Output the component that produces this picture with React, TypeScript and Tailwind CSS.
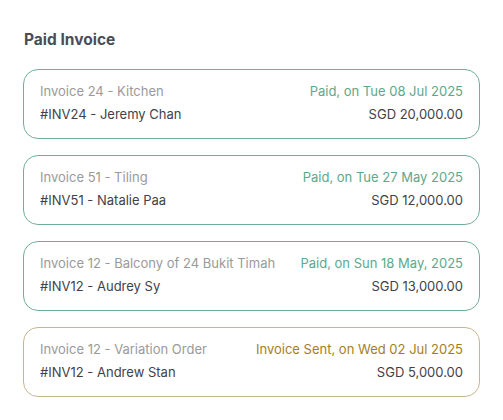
import React from "react";

type Inv = { title: string; ref: string; status: string; amount: string; sent?: boolean };

const items: Inv[] = [
  { title: "Invoice 24 - Kitchen", ref: "#INV24 - Jeremy Chan", status: "Paid, on Tue 08 Jul 2025", amount: "SGD 20,000.00" },
  { title: "Invoice 51 - Tiling", ref: "#INV51 - Natalie Paa", status: "Paid, on Tue 27 May 2025", amount: "SGD 12,000.00" },
  { title: "Invoice 12 - Balcony of 24 Bukit Timah", ref: "#INV12 - Audrey Sy", status: "Paid, on Sun 18 May, 2025", amount: "SGD 13,000.00" },
  { title: "Invoice 12 - Variation Order", ref: "#INV12 - Andrew Stan", status: "Invoice Sent, on Wed 02 Jul 2025", amount: "SGD 5,000.00", sent: true },
];

export default function App() {
  return (
    <div className="w-[503px] h-[420px] bg-white px-[23px] pt-[30px]" style={{ fontFamily: "Inter, 'Noto Sans', sans-serif" }}>
      <h1 className="text-[15.5px] font-bold text-[#4a4d56] leading-[20px] ml-[1px]">Paid Invoice</h1>
      <div className="mt-[19px] flex flex-col gap-[16px] w-[457px]">
        {items.map((it, i) => (
          <div
            key={i}
            className={`h-[70px] rounded-[15px] border px-[16px] pt-[11px] flex flex-col gap-[3px] ${it.sent ? "border-[#c9b58d]" : "border-[#72ad9c]"}`}
          >
            <div className="flex justify-between items-center text-[13px] leading-[20px]">
              <span className="text-[#9a9a9a]">{it.title}</span>
              <span className={it.sent ? "text-[#a27f1e]" : "text-[#5ba88d]"}>{it.status}</span>
            </div>
            <div className="flex justify-between items-center text-[13px] leading-[20px] text-[#3f424a]">
              <span>{it.ref}</span>
              <span>{it.amount}</span>
            </div>
          </div>
        ))}
      </div>
    </div>
  );
}
